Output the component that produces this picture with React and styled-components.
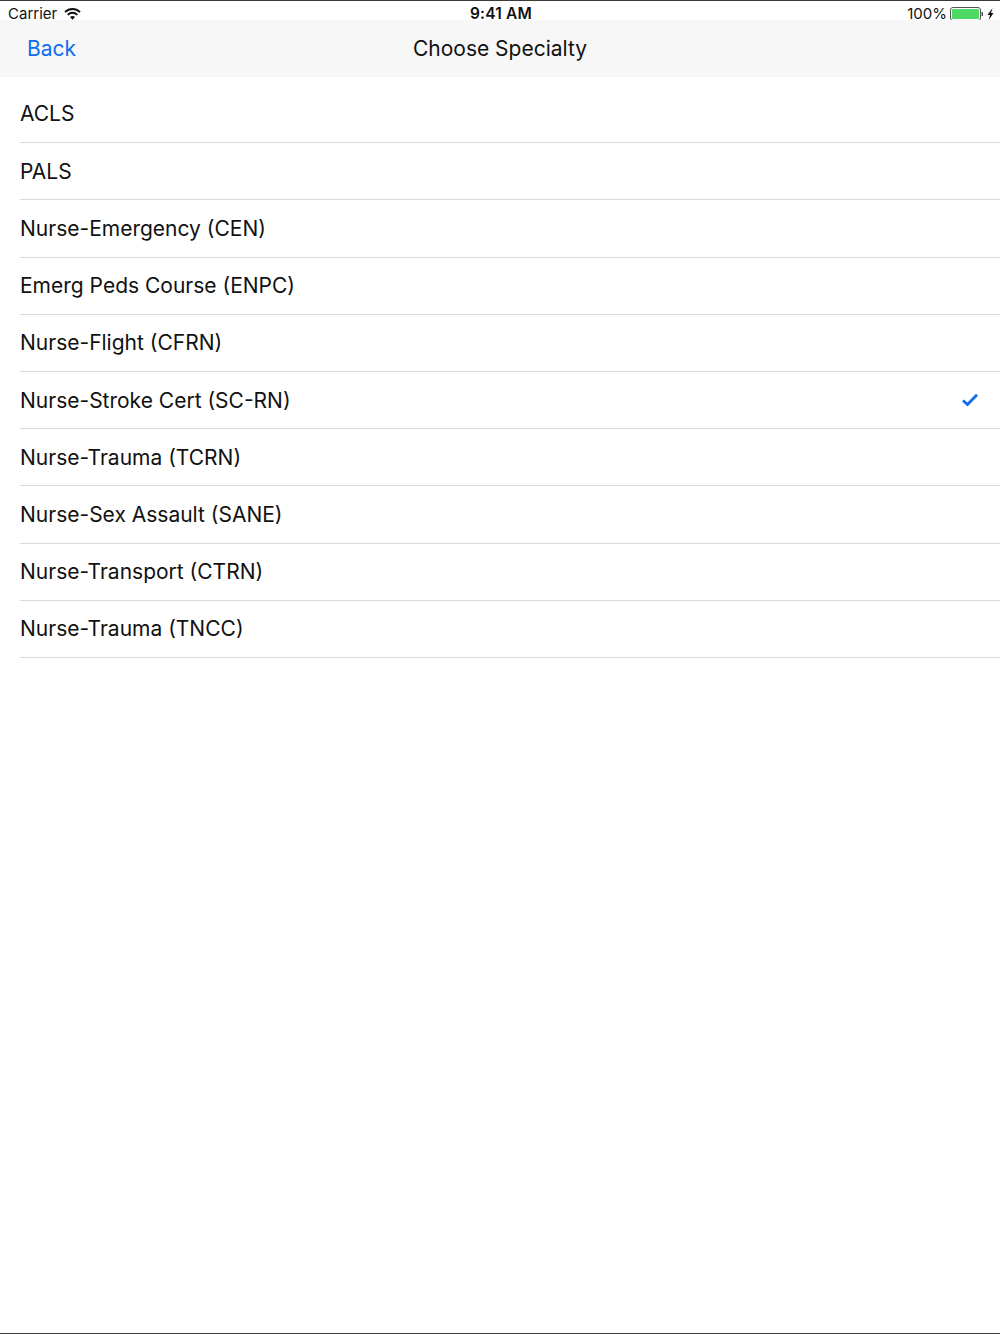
import React from "react";
import styled, { createGlobalStyle } from "styled-components";

const specialties = [
  "ACLS",
  "PALS",
  "Nurse-Emergency (CEN)",
  "Emerg Peds Course (ENPC)",
  "Nurse-Flight (CFRN)",
  "Nurse-Stroke Cert (SC-RN)",
  "Nurse-Trauma (TCRN)",
  "Nurse-Sex Assault (SANE)",
  "Nurse-Transport (CTRN)",
  "Nurse-Trauma (TNCC)",
];

const selected = "Nurse-Stroke Cert (SC-RN)";

function App() {
  return (
    <>
      <GlobalStyle />
      <StScreen>
        <StStatusBar>
          <StStatusSide>
            <span>Carrier</span>
            <WifiIcon />
          </StStatusSide>
          <StClock>9:41 AM</StClock>
          <StStatusSide $right>
            <span>100%</span>
            <BatteryIcon />
          </StStatusSide>
        </StStatusBar>
        <StNavBar>
          <StBack>Back</StBack>
          <StTitle>Choose Specialty</StTitle>
        </StNavBar>
        <StList>
          {specialties.map((name) => (
            <StRow key={name}>
              <span>{name}</span>
              {name === selected && <CheckIcon />}
            </StRow>
          ))}
        </StList>
      </StScreen>
    </>
  );
}

function WifiIcon() {
  return (
    <svg width="17" height="12" viewBox="0 0 17 12">
      <path d="M1 4.2 A10.5 10.5 0 0 1 16 4.2" fill="none" stroke="#111" strokeWidth="1.9" />
      <path d="M3.7 6.8 A6.6 6.6 0 0 1 13.3 6.8" fill="none" stroke="#111" strokeWidth="1.9" />
      <path d="M6 9.1 A3.3 3.3 0 0 1 11 9.1 L8.5 11.8 Z" fill="#111" />
    </svg>
  );
}

function BatteryIcon() {
  return (
    <svg width="44" height="14" viewBox="0 0 44 14">
      <rect x="0.5" y="0.5" width="30" height="13" rx="2.5" fill="none" stroke="#555" />
      <rect x="2" y="2" width="27" height="10" rx="1" fill="#4cd964" />
      <rect x="31.5" y="5" width="1.5" height="4" fill="#555" />
      <path d="M42.5 1 L37.5 8 H40 L38.8 13 L43.5 6 H41 Z" fill="#111" />
    </svg>
  );
}

function CheckIcon() {
  return (
    <svg width="18" height="14" viewBox="0 0 18 14">
      <path d="M2 7.5 L6.5 11.5 L16 1.8" fill="none" stroke="#0f6cf0" strokeWidth="2.8" />
    </svg>
  );
}

const GlobalStyle = createGlobalStyle`
  html, body {
    margin: 0;
    padding: 0;
    background: #fff;
  }
  body {
    font-family: Inter, "Liberation Sans", sans-serif;
    color: #111;
  }
`;

const StScreen = styled.div`
  display: flex;
  flex-direction: column;
  box-sizing: border-box;
  width: 1000px;
  height: 1334px;
  overflow: hidden;
  border-top: 1px solid #3a3a3a;
  border-bottom: 1px solid #3a3a3a;
`;

const StStatusBar = styled.div`
  display: grid;
  grid-template-columns: 1fr auto 1fr;
  grid-template-rows: 18px;
  align-items: center;
  box-sizing: border-box;
  height: 19px;
  padding: 4px 6px 0 8px;
  background: #fff;
  font-size: 15px;
  line-height: 18px;
`;

const StStatusSide = styled.div`
  display: flex;
  align-items: center;
  gap: ${({ $right }) => ($right ? "3px" : "7px")};
  justify-content: ${({ $right }) => ($right ? "flex-end" : "flex-start")};
`;

const StClock = styled.span`
  font-weight: 600;
  font-size: 15.5px;
  letter-spacing: 0.2px;
`;

const StNavBar = styled.div`
  position: relative;
  display: flex;
  align-items: center;
  justify-content: center;
  height: 57px;
  background: #f7f7f7;
`;

const StBack = styled.span`
  position: absolute;
  left: 27px;
  top: 15px;
  font-size: 21px;
  line-height: 27px;
  color: #0f6cf0;
`;

const StTitle = styled.h1`
  margin: 0;
  font-size: 21px;
  font-weight: 400;
  line-height: 27px;
`;

const StList = styled.div`
  display: flex;
  flex-direction: column;
  padding: 8px 0 0 20px;
`;

const StRow = styled.div`
  display: flex;
  align-items: center;
  justify-content: space-between;
  box-sizing: border-box;
  height: 57.2px;
  padding-right: 21px;
  border-bottom: 1px solid #d9d9d9;
  font-size: 21px;

  &:first-child {
    height: 58.2px;
    padding-bottom: 1px;
  }
`;

export default App;
